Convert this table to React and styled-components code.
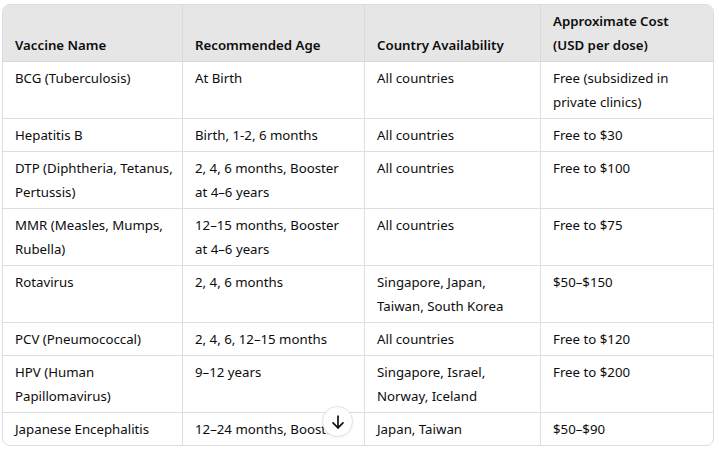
import React from "react";
import styled, { createGlobalStyle } from "styled-components";

const Global = createGlobalStyle`
  html, body { margin: 0; padding: 0; background: #ffffff; }
  body {
    font-family: "Noto Sans", "Open Sans", sans-serif;
    color: #0d0d0d;
    -webkit-font-smoothing: antialiased;
  }
`;

const Page = styled.div`
  position: relative;
  width: 719px;
  height: 451px;
  padding: 4px 0 0 2px;
  box-sizing: border-box;
`;

const Frame = styled.div`
  width: 712px;
  box-sizing: border-box;
  border: 1px solid #dcdcdc;
  border-radius: 8px;
  overflow: hidden;
`;

const Table = styled.table`
  width: 710px;
  table-layout: fixed;
  border-collapse: separate;
  border-spacing: 0;
  font-size: 13.25px;
  line-height: 24px;
`;

const Col = styled.col`
  width: ${(p) => p.$w}px;
`;

const Th = styled.th`
  background: #e6e6e6;
  font-weight: 600;
  text-align: left;
  vertical-align: bottom;
  padding: 4px 12px 4px 12px;
  border-bottom: 1px solid #d9d9d9;
  border-right: 1px solid #d9d9d9;
  &:last-child { border-right: none; }
`;

const Td = styled.td`
  text-align: left;
  vertical-align: top;
  padding: 4px ${(p) => (p.$first ? 6 : 12)}px 4px 12px;
  border-bottom: 1px solid #dedede;
  border-right: 1px solid #dedede;
  &:last-child { border-right: none; }
  tr:last-child > & { border-bottom: none; }
  white-space: ${(p) => (p.$clip ? "nowrap" : "normal")};
  overflow: hidden;
`;

const ScrollButton = styled.button`
  position: absolute;
  left: 322px;
  top: 406px;
  width: 31px;
  height: 31px;
  border-radius: 50%;
  background: #ffffff;
  border: 1px solid #e3e3e3;
  box-shadow: 0 1px 3px rgba(0, 0, 0, 0.06);
  display: flex;
  align-items: center;
  justify-content: center;
  padding: 0;
  color: #0d0d0d;
`;

const rows = [
  ["BCG (Tuberculosis)", "At Birth", "All countries", "Free (subsidized in private clinics)"],
  ["Hepatitis B", "Birth, 1-2, 6 months", "All countries", "Free to $30"],
  ["DTP (Diphtheria, Tetanus, Pertussis)", "2, 4, 6 months, Booster at 4–6 years", "All countries", "Free to $100"],
  ["MMR (Measles, Mumps, Rubella)", "12–15 months, Booster at 4–6 years", "All countries", "Free to $75"],
  ["Rotavirus", "2, 4, 6 months", "Singapore, Japan, Taiwan, South Korea", "$50–$150"],
  ["PCV (Pneumococcal)", "2, 4, 6, 12–15 months", "All countries", "Free to $120"],
  ["HPV (Human Papillomavirus)", "9–12 years", "Singapore, Israel, Norway, Iceland", "Free to $200"],
  ["Japanese Encephalitis", "12–24 months, Booster", "Japan, Taiwan", "$50–$90"],
];

const widths = [180, 182, 176, 172];

export default function App() {
  return (
    <>
      <Global />
      <Page>
        <Frame>
          <Table>
            <colgroup>
              {widths.map((w, i) => (
                <Col key={i} $w={w} />
              ))}
            </colgroup>
            <thead>
              <tr>
                <Th>Vaccine Name</Th>
                <Th>Recommended Age</Th>
                <Th>Country Availability</Th>
                <Th>Approximate Cost (USD per dose)</Th>
              </tr>
            </thead>
            <tbody>
              {rows.map((r, i) => {
                const last = i === rows.length - 1;
                return (
                  <tr key={i}>
                    {r.map((c, j) => (
                      <Td key={j} $clip={last} $first={j === 0}>
                        {c}
                      </Td>
                    ))}
                  </tr>
                );
              })}
            </tbody>
          </Table>
        </Frame>
        <ScrollButton aria-label="Scroll down">
          <svg width="20" height="20" viewBox="0 0 24 24" fill="none" stroke="currentColor" strokeWidth="2" strokeLinecap="round" strokeLinejoin="round">
            <path d="M12 5v14" />
            <path d="M18 13l-6 6-6-6" />
          </svg>
        </ScrollButton>
      </Page>
    </>
  );
}
